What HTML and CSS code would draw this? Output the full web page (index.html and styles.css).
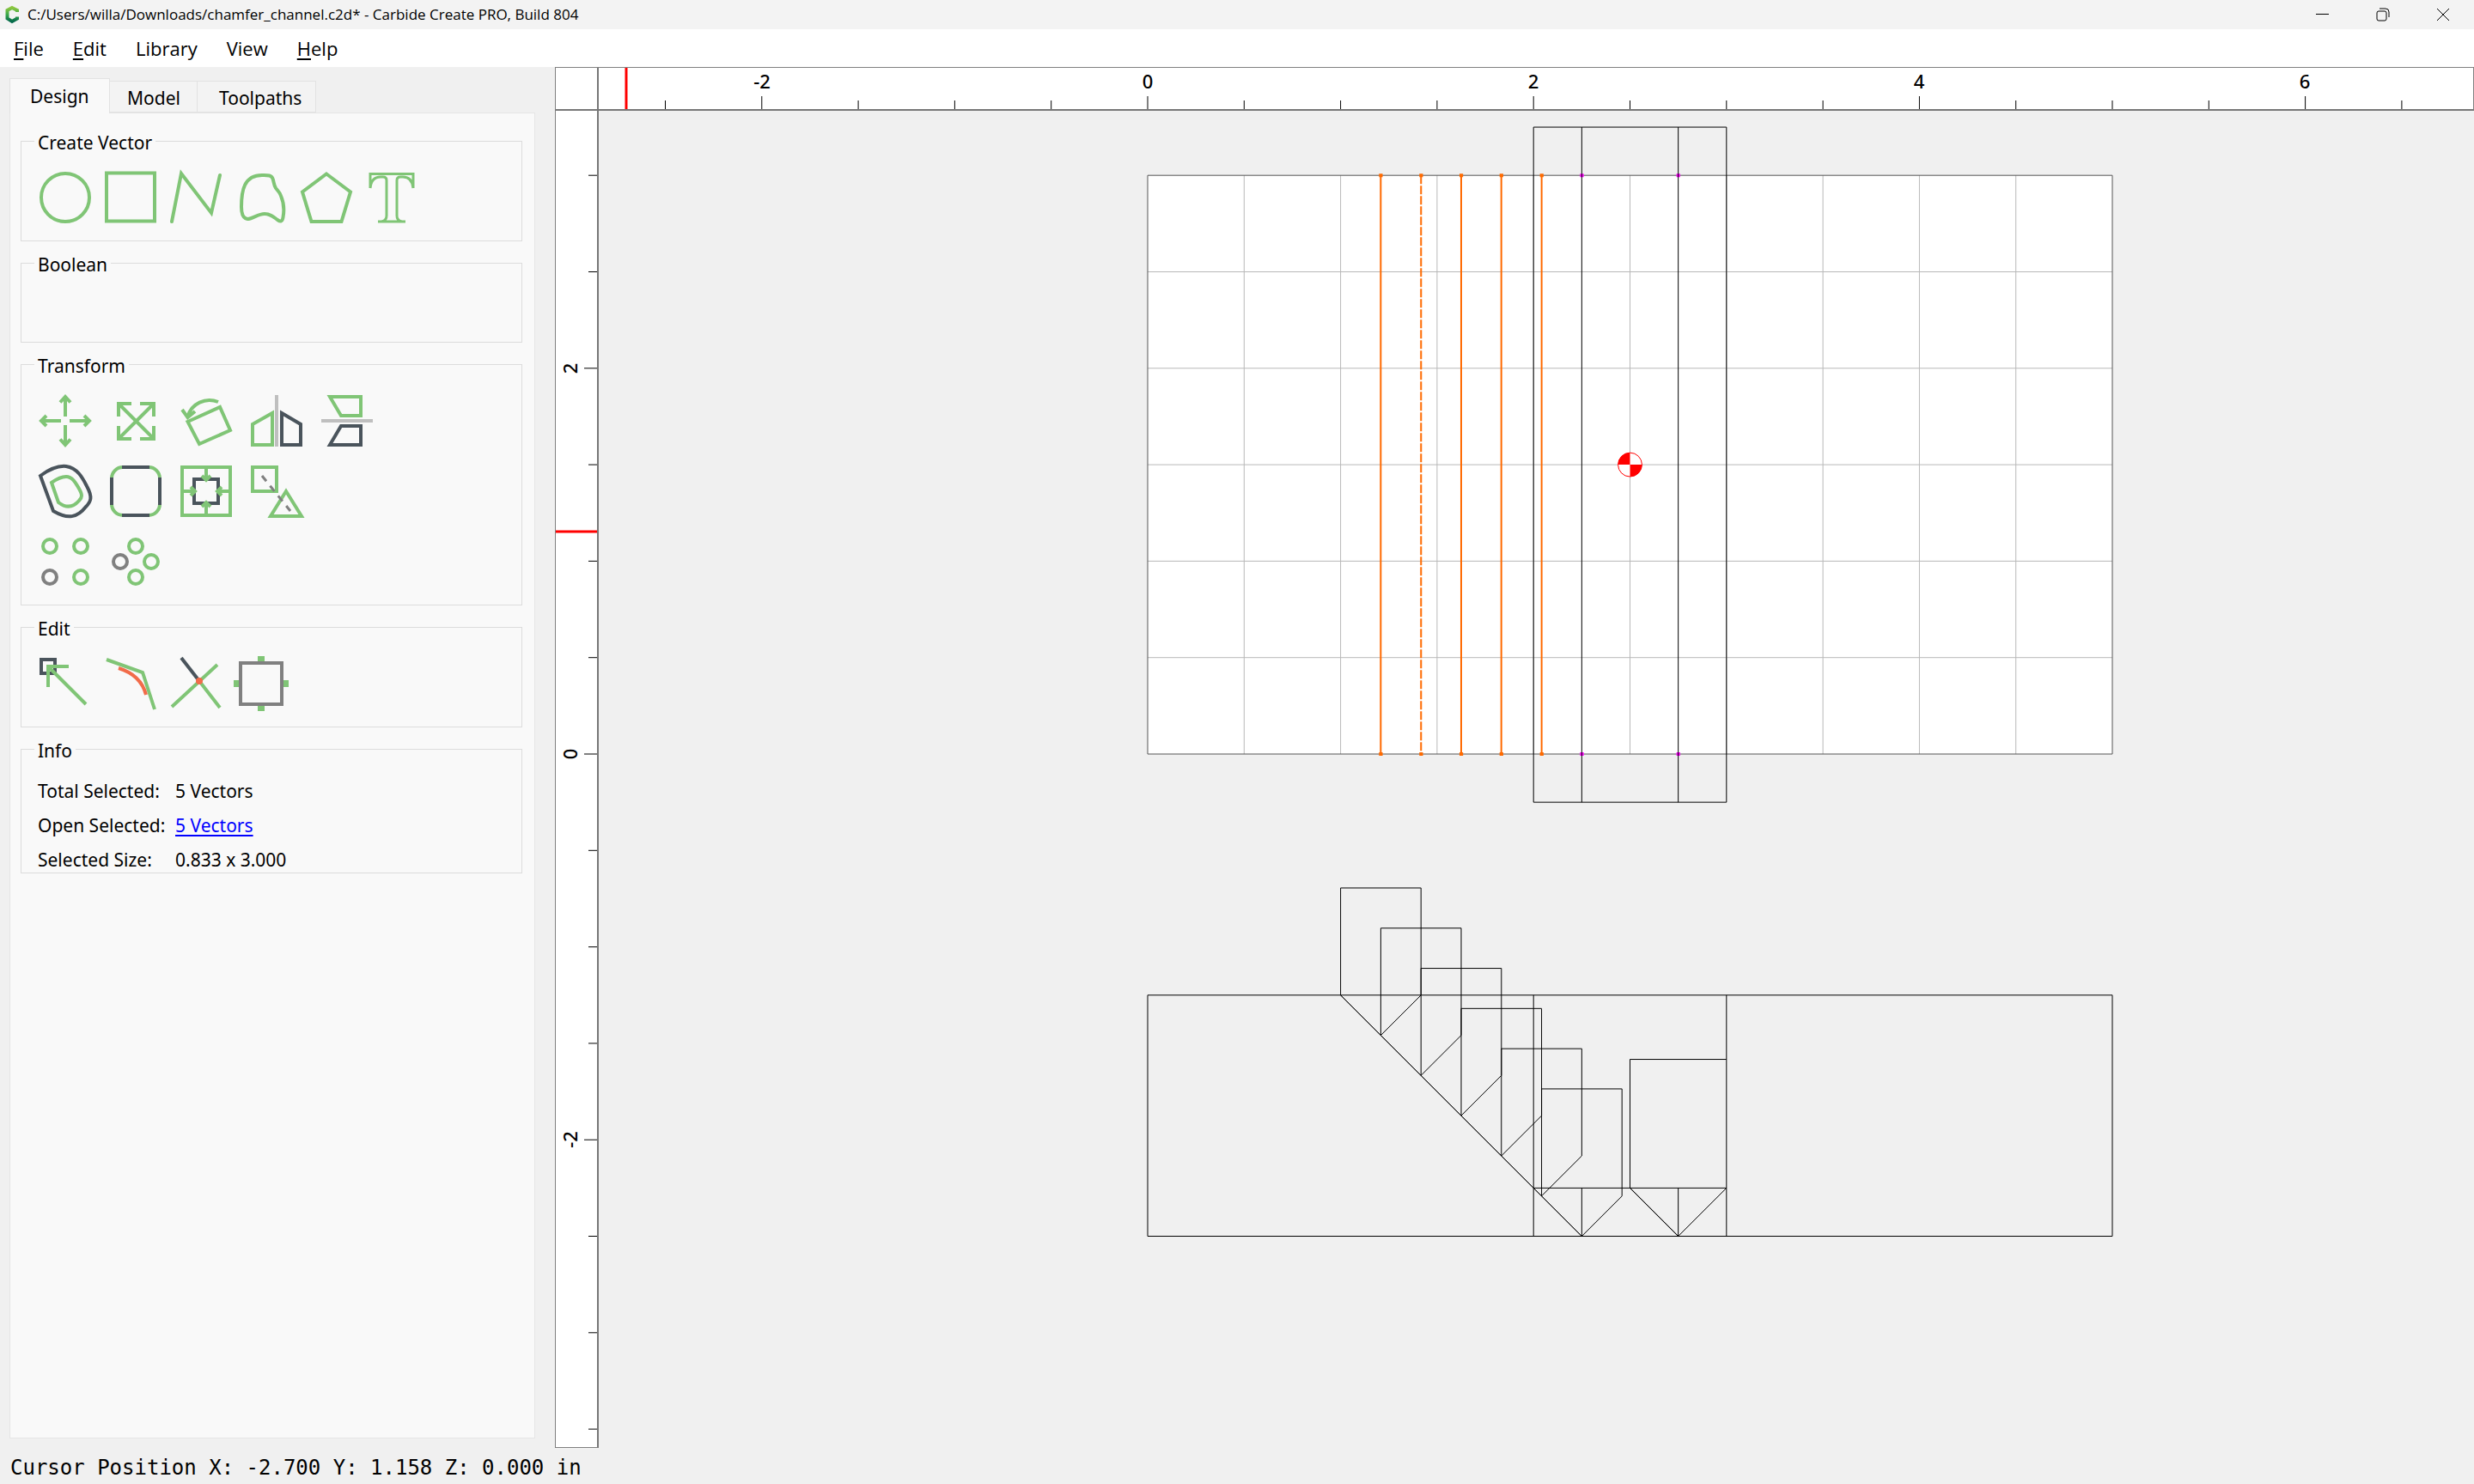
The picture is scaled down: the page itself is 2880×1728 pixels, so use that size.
FILE: index.html
```html
<!DOCTYPE html>
<html lang="en">
<head>
<meta charset="utf-8">
<title>Carbide Create PRO</title>
<link rel="stylesheet" href="styles.css">
</head>
<body>
<header class="titlebar">
  <svg class="logo" viewBox="0 0 16 20" aria-hidden="true">
    <defs><linearGradient id="leaf" x1="0" y1="0" x2="0" y2="1"><stop offset="0" stop-color="#8cc63f"/><stop offset=".5" stop-color="#39a84a"/><stop offset="1" stop-color="#046a4b"/></linearGradient></defs>
    <path d="M14 7V5L8 2L2.500 5V14.500L8 18L14 14.500V12.500" fill="none" stroke="url(#leaf)" stroke-width="4"/>
  </svg>
  <h1 class="title">C:/Users/willa/Downloads/chamfer_channel.c2d* - Carbide Create PRO, Build 804</h1>
  <div class="window-controls">
    <button class="window-button" aria-label="Minimize"><svg viewBox="0 0 16 16"><path d="M0 7.500h15"/></svg></button>
    <button class="window-button" aria-label="Restore"><svg viewBox="0 0 16 16"><rect x="1" y="4" width="11" height="11" rx="2"/><path d="M4 1h7q4 0 4 4v6"/></svg></button>
    <button class="window-button" aria-label="Close"><svg viewBox="0 0 16 16"><path d="M1 1l14 14M15 1L1 15"/></svg></button>
  </div>
</header>
<nav class="menubar">
  <button class="menu"><u>F</u>ile</button>
  <button class="menu"><u>E</u>dit</button>
  <button class="menu">Library</button>
  <button class="menu">View</button>
  <button class="menu"><u>H</u>elp</button>
</nav>
<main class="workspace">
  <aside class="sidebar">
    <div class="tabs" role="tablist">
      <button class="tab tab-active" role="tab" aria-selected="true">Design</button>
      <button class="tab" role="tab">Model</button>
      <button class="tab tab-wide" role="tab">Toolpaths</button>
    </div>
    <div class="panel">
      <fieldset class="group">
        <legend>Create Vector</legend>
        <div class="tools">
          <button class="tool" aria-label="Circle"><svg viewBox="0 0 60 60"><circle cx="30" cy="30" r="28"/></svg></button>
          <button class="tool" aria-label="Rectangle"><svg viewBox="0 0 60 60"><path d="M2 1.500H58V57.500H2Z"/></svg></button>
          <button class="tool" aria-label="Polyline"><svg viewBox="0 0 60 60"><path stroke-linecap="round" d="M2 58L13 2L48 48L58 4"/></svg></button>
          <button class="tool" aria-label="Curve"><svg viewBox="0 0 60 60"><path d="M31 4C37 4 42 3.500 43.500 8C45 12 44.500 15 47 19C49 22 52 24 53 28C56 35 57 45 55.500 53C54.500 59 52 58 49 56C44 52 40 49 34 49C26 49 20 55 14 55C8 54 7 48 7 41C7 22 10 4 31 4Z"/></svg></button>
          <button class="tool" aria-label="Polygon"><svg viewBox="0 0 60 60"><path d="M30 2.500L58 23.500L47.500 58H12.500L2 23.500Z"/></svg></button>
          <button class="tool" aria-label="Text"><svg viewBox="0 0 60 60"><path stroke-width="3" d="M5 19V2.500H55V19M5 19C6 9 11 6 17 6H20Q24 6 24 10V51Q24 57 18 58M55 19C54 9 49 6 43 6H40Q36 6 36 10V51Q36 57 42 58M14 58H46"/></svg></button>
        </div>
      </fieldset>
      <fieldset class="group">
        <legend>Boolean</legend>
        <div class="tools tools-empty"></div>
      </fieldset>
      <fieldset class="group">
        <legend>Transform</legend>
        <div class="tools tools-grid">
          <button class="tool" aria-label="Move"><svg viewBox="0 0 60 60"><path d="M30 2V25M30 35V58M2 30H25M35 30H58M24 8.500L30 2L36 8.500M24 51.500L30 58L36 51.500M8 24L2 30L8 36M52 24L58 30L52 36"/></svg></button>
          <button class="tool" aria-label="Scale"><svg viewBox="0 0 60 60"><path d="M10 25V10H25M35 10H51V25M51 36V51H35M25 51H10V36M10 10L51 51M51 10L10 51"/></svg></button>
          <button class="tool" aria-label="Rotate"><svg viewBox="0 0 60 60"><path d="M8.500 31L46 14L58 41L22 57ZM44 8C29 2 13 10 8.500 25M2 17L8.500 26L17 19"/></svg></button>
          <button class="tool" aria-label="Mirror horizontally"><svg viewBox="0 0 60 60"><path d="M2 34L25 21V58H2Z"/><path class="dark" d="M36 21L58 34V58H36Z"/><path class="axis" d="M30 0V60"/></svg></button>
          <button class="tool" aria-label="Mirror vertically"><svg viewBox="0 0 60 60"><path d="M10 2H46V24H23Z"/><path class="dark" d="M23 36H46V58H10Z"/><path class="axis" d="M0 30H60"/></svg></button>
          <button class="tool" aria-label="Offset"><svg viewBox="0 0 60 60"><path class="dark" d="M1 12C12 4 22 0 31 1C44 3 50 14 55 24C62 37 60 42 54 48C44 61 33 63 16 53Z"/><path d="M14 20C21 15 26 13 31 13C38 13 42 20 46 27C50 34 50 37 46 41C39 49 31 50 22 43Z"/></svg></button>
          <button class="tool" aria-label="Corners"><svg viewBox="0 0 60 60"><rect x="2" y="2" width="56" height="56" rx="13"/><path class="dark" d="M14 2H46M14 58H46M2 14V46M58 14V46"/></svg></button>
          <button class="tool" aria-label="Fit"><svg viewBox="0 0 60 60"><path d="M2 2H58V58H2Z"/><path class="dark" d="M16 16H44V44H16Z"/><path d="M30 2V16M30 58V44M2 30H16M58 30H44M25 12L30 17L35 12M25 48L30 43L35 48M12 25L17 30L12 35M48 25L43 30L48 35"/></svg></button>
          <button class="tool" aria-label="Align"><svg viewBox="0 0 60 60"><path d="M2 2H30V30H2ZM41 30L59 59H23Z"/><path class="gray" stroke-width="3" stroke-dasharray="8 7" d="M13 12L46 53"/></svg></button>
          <button class="tool tool-first" aria-label="Linear array"><svg viewBox="0 0 60 60"><circle cx="12" cy="12" r="8"/><circle cx="48" cy="12" r="8"/><circle cx="48" cy="48" r="8"/><circle class="gray" cx="12" cy="48" r="8"/></svg></button>
          <button class="tool" aria-label="Circular array"><svg viewBox="0 0 60 60"><circle cx="30" cy="12" r="8"/><circle cx="48" cy="30" r="8"/><circle cx="30" cy="48" r="8"/><circle class="gray" cx="12" cy="30" r="8"/></svg></button>
        </div>
      </fieldset>
      <fieldset class="group">
        <legend>Edit</legend>
        <div class="tools">
          <button class="tool" aria-label="Edit nodes"><svg viewBox="0 0 60 60"><path class="dark" d="M2 2H18V18H2Z"/><path d="M10 34V10H34M10 10L54 54"/></svg></button>
          <button class="tool" aria-label="Fillet"><svg viewBox="0 0 60 60"><path d="M2 2L44 17L58 60"/><path class="hot" d="M16 12Q42 20 48 43"/></svg></button>
          <button class="tool" aria-label="Trim"><svg viewBox="0 0 60 60"><path d="M55 8L2 57M34 27L58 58"/><path class="dark" d="M13 0L34 27"/><circle class="hot-dot" cx="34" cy="27" r="4"/></svg></button>
          <button class="tool" aria-label="Tabs"><svg viewBox="0 0 60 60"><path class="gray" d="M6 6H54V54H6Z"/><path stroke-width="8" d="M30 -2V4M30 56V62M-2 30H4M56 30H62"/></svg></button>
        </div>
      </fieldset>
      <fieldset class="group">
        <legend>Info</legend>
        <dl class="info">
          <dt>Total Selected:</dt><dd>5 Vectors</dd>
          <dt>Open Selected:</dt><dd><a href="#open">5 Vectors</a></dd>
          <dt>Selected Size:</dt><dd>0.833 x 3.000</dd>
        </dl>
      </fieldset>
    </div>
  </aside>
  <section class="stage">
    <div class="corner"></div>
    <div class="ruler ruler-x">
      <svg>
        <path class="tick" transform="translate(639 48) scale(224.600 1)" d="M-2.500 0v-10M-2 0v-15M-1.500 0v-10M-1 0v-10M-.5 0v-10M0 0v-15M.5 0v-10M1 0v-10M1.500 0v-10M2 0v-15M2.500 0v-10M3 0v-10M3.500 0v-10M4 0v-15M4.500 0v-10M5 0v-10M5.500 0v-10M6 0v-15M6.500 0v-10"/>
        <text x="190" y="24">-2</text>
        <text x="639" y="24">0</text>
        <text x="1088" y="24">2</text>
        <text x="1537" y="24">4</text>
        <text x="1986" y="24">6</text>
        <path class="cursor" d="M32 0V50"/>
      </svg>
    </div>
    <div class="ruler ruler-y">
      <svg>
        <path class="tick" transform="translate(48 749) scale(1 -224.600)" d="M0 3h-10M0 2.500h-10M0 2h-15M0 1.500h-10M0 1h-10M0 .5h-10M0 0h-15M0 -.5h-10M0 -1h-10M0 -1.500h-10M0 -2h-15M0 -2.500h-10M0 -3h-10M0 -3.500h-10"/>
        <text transform="translate(25 300) rotate(-90)">2</text>
        <text transform="translate(25 749) rotate(-90)">0</text>
        <text transform="translate(25 1198) rotate(-90)">-2</text>
        <path class="cursor" d="M0 490H50"/>
      </svg>
    </div>
    <div class="canvas">
      <svg>
        <defs><path id="bit" d="M0 0V.5556H.4167V0L.2083 -.2083Z"/></defs>
        <g class="drawing" transform="translate(639 749) scale(224.600 -224.600)">
          <rect class="stock" width="5" height="3"/>
          <path class="grid" d="M.5 0V3M1 0V3M1.500 0V3M2 0V3M2.500 0V3M3 0V3M3.500 0V3M4 0V3M4.500 0V3M0 .5H5M0 1H5M0 1.500H5M0 2H5M0 2.500H5"/>
          <rect class="edge" width="5" height="3"/>
          <path class="node" d="M2.250 0h.001M2.250 3h.001M2.750 0h.001M2.750 3h.001"/>
          <path class="line" d="M2 -.25V3.250H3V-.25ZM2.250 -.25V3.250M2.750 -.25V3.250"/>
          <path class="selected" d="M1.208 0V3M1.625 0V3M1.833 0V3M2.042 0V3"/>
          <path class="selected dashed" d="M1.417 3V0"/>
          <path class="selected-node" d="M1.208 0h.001M1.417 0h.001M1.625 0h.001M1.833 0h.001M2.042 0h.001M1.208 3h.001M1.417 3h.001M1.625 3h.001M1.833 3h.001M2.042 3h.001"/>
          <path class="line" d="M0 -1.250H5V-2.500H0ZM2 -1.250V-2.500M3 -1.250V-2.500M2 -2.250H3M2.250 -2.250V-2.500M2.750 -2.250V-2.500M3 -1.583H2.500V-2.250L2.750 -2.500L3 -2.250"/>
          <path class="line" d="M1 -1.250L2.250 -2.500M2.500 -2.250L2.750 -2.500"/>
          <g class="line">
            <use href="#bit" x="1" y="-1.250"/>
            <use href="#bit" x="1.2083" y="-1.4583"/>
            <use href="#bit" x="1.4167" y="-1.6667"/>
            <use href="#bit" x="1.625" y="-1.875"/>
            <use href="#bit" x="1.8333" y="-2.0833"/>
            <use href="#bit" x="2.0417" y="-2.2917"/>
          </g>
          <circle class="origin" cx="2.500" cy="1.500" r=".062"/>
          <path class="origin-fill" d="M2.500 1.500H2.438A.062 .062 0 0 0 2.500 1.562ZM2.500 1.500H2.562A.062 .062 0 0 0 2.500 1.438Z"/>
        </g>
      </svg>
    </div>
  </section>
</main>
<footer class="statusbar">Cursor Position X: -2.700 Y: 1.158 Z: 0.000 in</footer>
</body>
</html>
```
FILE: styles.css
```css
* { box-sizing: border-box; }

body {
  margin: 0;
  height: 100vh;
  display: flex;
  flex-direction: column;
  background: #f0f0f0;
  color: #000;
  font: 21px/24px "Noto Sans", "Open Sans", sans-serif;
}

button {
  margin: 0;
  padding: 0;
  border: 0;
  background: none;
  color: inherit;
  font: inherit;
}

svg { display: block; overflow: visible; }

/* Window frame */
.titlebar {
  display: flex;
  align-items: center;
  height: 34px;
  padding-left: 6px;
  background: #f3f3f3;
}
.logo { width: 16px; height: 20px; }
.title {
  flex: 1;
  margin: 0 0 0 10px;
  font: 400 17px/34px "Open Sans", sans-serif;
}
.window-controls { display: flex; gap: 54px; padding-right: 28px; }
.window-button { width: 16px; height: 16px; }
.window-button svg { width: 16px; height: 16px; fill: none; stroke: #000; stroke-width: 1; }

.menubar {
  display: flex;
  gap: 34px;
  height: 44px;
  padding: 0 16px;
  background: #fff;
  font: 22px/44px "Open Sans", sans-serif;
}
.menu { height: 44px; }
.menu u { text-underline-offset: 3px; text-decoration-thickness: 2px; }

.workspace { flex: 1; min-height: 0; display: flex; }

/* Side panel */
.sidebar {
  display: flex;
  flex-direction: column;
  width: 646px;
  padding: 12px 23px 11px 11px;
}
.tabs { display: flex; align-items: flex-end; height: 41px; }
.tab {
  width: 102px;
  height: 37px;
  padding-left: 20px;
  border: 1px solid #e2e2e2;
  border-left: 0;
  background: #f3f3f3;
  line-height: 38px;
  text-align: left;
}
.tab-wide { width: 138px; padding-left: 25px; }
.tab-active {
  width: 117px;
  height: 41px;
  padding-left: 23px;
  margin-bottom: -1px;
  border-left: 1px solid #e2e2e2;
  border-bottom: 0;
  background: #f9f9f9;
  position: relative;
}
.panel {
  flex: 1;
  display: flex;
  flex-direction: column;
  gap: 13px;
  padding: 20px 14px 0 12px;
  border: 1px solid #e5e5e5;
  background: #f9f9f9;
}
.group {
  margin: 0;
  padding: 0 15px;
  border: 1px solid #dcdcdc;
  min-width: 0;
}
.group legend { padding: 0 4px; height: 24px; line-height: 28px; }
.tools { display: flex; gap: 16px; padding: 24px 6px 20px; }
.tools-empty { height: 80px; }
.tools-grid {
  display: grid;
  grid-template-columns: repeat(5, 60px);
  gap: 22px;
}
.tool-first { grid-column-start: 1; }
.tool, .tool svg { width: 60px; height: 60px; }
.tool svg { fill: none; stroke: #80c576; stroke-width: 4; }
.tool .dark { stroke: #4a545c; }
.tool .gray { stroke: #808080; }
.tool .axis { stroke: #bfbfbf; }
.tool .hot { stroke: #f26c4a; }
.tool .hot-dot { fill: #f26c4a; stroke: none; }

.info {
  display: grid;
  grid-template-columns: 160px 1fr;
  row-gap: 10px;
  margin: 0;
  padding: 22px 4px 0;
  line-height: 30px;
}
.info dd { margin: 0; }
.info a { color: #00f; text-underline-offset: 3px; text-decoration-thickness: 2px; }

/* Rulers and drawing area */
.stage {
  flex: 1;
  min-width: 0;
  display: grid;
  grid-template: 50px minmax(0, 1fr) / 50px minmax(0, 1fr);
  border-top: 1px solid #808080;
  border-left: 1px solid #808080;
}
.stage svg { width: 100%; height: 100%; overflow: hidden; }
.corner, .ruler { background: #fff; }
.corner, .ruler-x { border-bottom: 2px solid #777; }
.corner, .ruler-y { border-right: 2px solid #777; }
.ruler-x { border-right: 1px solid #808080; }
.ruler-y { border-bottom: 1px solid #808080; }
.ruler text { font: 500 22px "Noto Sans", sans-serif; text-anchor: middle; }
.tick { fill: none; stroke: #000; vector-effect: non-scaling-stroke; }
.cursor { stroke: #f00; stroke-width: 3; }

.drawing * { vector-effect: non-scaling-stroke; }
#bit { vector-effect: non-scaling-stroke; }
.stock { fill: #fff; }
.grid { fill: none; stroke: #b8b8b8; }
.edge { fill: none; stroke: #555; }
.line { fill: none; stroke: #000; }
.node { stroke: #f0f; stroke-width: 4; }
.node, .selected-node { stroke-linecap: square; }
.selected { fill: none; stroke: #ff6a00; stroke-width: 2; }
.dashed { stroke-dasharray: 10 2; }
.selected-node { stroke: #ff6a00; stroke-width: 4; }
.origin { fill: #fff; stroke: #f00; }
.origin-fill { fill: #f00; }

.statusbar {
  height: 42px;
  padding-left: 12px;
  font: 24px/46px "DejaVu Sans Mono", monospace;
}
```
